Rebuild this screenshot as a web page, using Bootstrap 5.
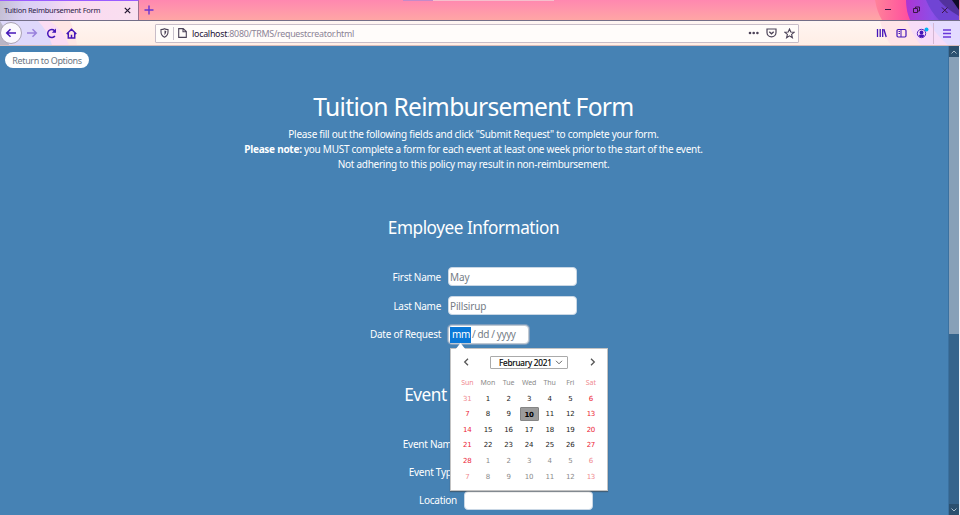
<!DOCTYPE html>
<html lang="en">
<head>
<meta charset="utf-8">
<title>Tuition Reimbursement Form</title>
<link href="https://cdn.jsdelivr.net/npm/bootstrap@5.3.0/dist/css/bootstrap.min.css" rel="stylesheet">
<style>
html{font-size:10px}
body{width:960px;height:515px;overflow:hidden;font-family:"Noto Sans","Open Sans",sans-serif;font-size:10px;background:#fff;line-height:15px}
svg{display:block;flex:none;fill:none;stroke:currentColor}
svg.strip-art,svg.tool-art{stroke:none}
.tabs-strip{height:21px;background:linear-gradient(#ff88b0,#ffa6a5);border-bottom:1px solid #736e88;position:relative}
.strip-art{position:absolute;right:1px;top:0}
.tab-open{width:139px;height:20px;border-top:1px solid #9a5cff;border-right:1px solid #9a6f8d;background:linear-gradient(100deg,#c3bed2 0,#d9d0f4 18%,#e5d3f5 35%,#fbdaf0 52%,#f8dff0 100%);padding-left:4px;color:#2b1a45;font-size:7.5px;letter-spacing:-.27px}
.new-tab{margin-left:5px;color:#6a35d0}
.win-keys{right:1px;top:0;height:20px;color:#3b1746;z-index:2}
.top-line{left:403px;top:0;width:151px;height:1px;background:linear-gradient(90deg,#c58ac8 20%,#f5bfcc 20%)}
.tool-strip{height:25px;border-bottom:1px solid #d9bcbb;background:linear-gradient(#fff5f2,#ffeee5);color:#4516b8;position:relative}
.tool-art{position:absolute;left:0;top:0}
.tool-strip>.above{position:relative;z-index:1;flex:none}
.back-key{width:22px;height:22px;border:1px solid #a9a2b4;background:#fbf8fe}
.url-box{position:relative;z-index:1;flex:none;width:644px;height:19px;background:#fffcfa;border:1px solid #c8bdc8;border-radius:1px;color:#4c4358;padding:0 3px 0 4px}
.keys-left{width:155px}
.url-text{font-size:8.9px;color:#8c8496;letter-spacing:-.32px;letter-spacing:-.26px;padding-top:1px;margin-left:5px}
.url-text b{font-weight:400;color:#221436}
.page-view{height:469px;width:948px;background:#4682b4;color:#fff;overflow:hidden}
.return-btn{margin:6px 0 0 5px;width:84px;height:16px;background:#fff;color:#6c7885;font-size:9px;letter-spacing:-.37px;line-height:17px;border-radius:8px}
.title-main{font-size:24.6px;line-height:30px;font-weight:400;margin:24px 0 5px;letter-spacing:-.7px;padding-right:1px}
.intro{letter-spacing:-.27px;font-size:10px;padding-right:1px}
.sect{font-size:17.2px;line-height:22px;font-weight:400;margin:0;letter-spacing:-.46px;padding-right:1px}
.field-row{height:19px;margin-bottom:10px}
.lab{width:441px;text-align:right;letter-spacing:-.27px;padding-top:1px}
.lab-event{width:457px;padding-top:0}
.field-row .entry{width:129px;height:19px;min-height:0;margin-left:7px;padding:1px 1px 0;border:1px solid #c9d7e5;border-radius:4px;font-size:10px;line-height:17px;letter-spacing:-.15px;color:#757d86;background:#fff}
.field-row .date-entry{width:81px;padding:0 2px;border:1px solid #bfc9d3;box-shadow:0 0 0 1px #7e9dbd;letter-spacing:-.4px}
.date-label{padding-top:0}
.seg-on{background:#0a78d7;color:#fff;padding:0 1px 0 2px;margin-left:-1px;height:16px;line-height:15px;width:21px}
.scroller{width:12px;height:469px;background:#35648c;border-left:1px solid #3b71a0;border-right:1px solid #f4f4f8}
.scroller .cap{height:11px;background:#2b506f;color:#a9bccb}
.scroller .thumb{height:277px;background:#87a0b8}
.date-pop{left:450px;top:348px;width:158px;height:143px;background:#fff;border:1px solid #c3c3c3;box-shadow:0 1px 1px rgba(60,60,60,.5);z-index:5;color:#222}
.date-pop .tip{left:4px;top:-6px;color:#fff}
.month-bar{height:20px;margin:3px 10px 1px 11px;color:#555}
.month-pick{width:78px;height:13px;border:1px solid #aaa;border-radius:1px;color:#000;font-size:8.2px;letter-spacing:-.2px;line-height:11px;margin-left:20px;padding-left:8px;-webkit-text-stroke:.15px #000}
.day-grid{display:grid;grid-template-columns:repeat(7,20.6px);grid-template-rows:repeat(7,15.6px);margin:3px 0 0 6px;text-align:center;font-family:"DejaVu Sans","Noto Sans",sans-serif;font-size:7px;line-height:16px;letter-spacing:-.25px;color:#222}
.day-grid span:nth-child(7n+1),.day-grid span:nth-child(7n){color:#ec2636}
.day-grid .out{color:#8a8a8a}
.day-grid .head{font-family:"Noto Sans",sans-serif;color:#8a8a8a;letter-spacing:-.1px;line-height:15px}
.day-grid .out:nth-child(7n+1),.day-grid .out:nth-child(7n),.day-grid .head:nth-child(7n+1),.day-grid .head:nth-child(7n){color:#f08a90}
.day-grid .today{background:#9c9c9c;border:1px solid #858585;border-radius:1px;font-weight:700;color:#000;margin:.4px .8px 1px;line-height:14px}
</style>
<script src="https://cdn.jsdelivr.net/npm/bootstrap@5.3.0/dist/js/bootstrap.bundle.min.js"></script>
</head>
<body class="position-relative">
<header>
  <div class="tabs-strip d-flex align-items-center">
    <svg class="strip-art" width="90" height="20"><defs><linearGradient id="pk"><stop offset="0" stop-color="#ff8299"/><stop offset=".5" stop-color="#ff43a0"/></linearGradient><linearGradient id="vi"><stop offset="0" stop-color="#ad35d2"/><stop offset=".5" stop-color="#8c4ee8"/><stop offset="1" stop-color="#6b40cf"/></linearGradient></defs><path d="M6 0q2 12 7 20h77V0z" fill="url(#pk)"/><path d="M37 0q0 11 4 20h49V0z" fill="url(#vi)"/><path d="M57 0q5 12 13 20h20V0z" fill="#7044d4"/><path d="M70 0q6 8 20 16V0z" fill="#3b2270" opacity=".55"/><path d="M83 0l7 10V0z" fill="#100c28"/></svg>
    <div class="tab-open d-flex align-items-center"><span>Tuition Reimbursement Form</span><svg class="ms-auto" style="margin-right:7px" width="7" height="7"><path d="M.8.8l5.4 5.4M6.2.8L.8 6.2" stroke="#20152f" stroke-width="1.2"/></svg></div>
    <svg class="new-tab" width="10" height="10"><path d="M5 .5v9M.5 5h9" stroke-width="1.4"/></svg>
    <div class="top-line position-absolute"></div>
    <div class="win-keys position-absolute d-flex align-items-center">
      <svg width="75" height="20"><path d="M1 9.500h6M29.500 8.500h4v4h-4zM31.500 8.500v-1.500h4v4h-2M58 7.500l5.500 5.500M63.500 7.500L58 13"/></svg>
    </div>
  </div>
  <div class="tool-strip d-flex align-items-center">
    <svg class="tool-art" width="960" height="24"><path d="M0 0h70q5 10 7 24H0z" fill="#ffe6e4"/><path d="M0 0h50q14 10 19 24H0z" fill="#fbdcf3"/><path d="M0 0h38q10 10 14 24H0z" fill="#ded8fb"/><path d="M0 0q7 10 9 24H0z" fill="#b9b5c6"/><path d="M880 0q3 14 11 24h69V0z" fill="#ffe4e8"/><path d="M907 0q6 15 14 24h39V0z" fill="#f7dcf8"/><path d="M928 0q8 14 20 24h12V0z" fill="#e4dbff"/></svg>
    <div class="above keys-left d-flex align-items-center">
      <div class="back-key rounded-circle d-flex align-items-center justify-content-center"><svg width="12" height="10"><path d="M11 5H2M5.500 1.200L1.700 5l3.800 3.800" stroke-width="1.500"/></svg></div>
      <svg style="margin-left:4px;opacity:.45" width="12" height="10"><path d="M1 5h9M6.500 1.200L10.300 5 6.500 8.800" stroke-width="1.500"/></svg>
      <svg style="margin-left:8px" width="11" height="11"><path d="M8.900 8A4 4 0 1 1 8.600 2.800L9.600 4" stroke-width="1.500"/><path d="M10 .5v4.200H5.800z" fill="currentColor" stroke="none"/></svg>
      <svg style="margin-left:9px" width="11" height="11"><path d="M.7 6L5.500 1.200 10.300 6M2.300 5v5h6.400V5M5.500 10V6.800" stroke-width="1.500"/></svg>
    </div>
    <div class="url-box d-flex align-items-center">
      <svg width="9" height="10"><path d="M1 1.500Q3 1.500 4.500.700 6 1.500 8 1.500V4q0 3.500-3.500 5.200Q1 7.500 1 4z" stroke-width="1.100"/><path d="M4.500 2.500v4.700Q6.300 6 6.300 3.100z" fill="currentColor" stroke="none"/></svg>
      <svg style="margin-left:4px" width="1" height="13"><path d="M.5 0v13" stroke="#c9c2cc"/></svg>
      <svg style="margin-left:4px" width="9" height="10"><path d="M.7.600h4.500L8.300 3.500v5.900H.7zM5 .600v3.200h3.300" stroke-width="1.100"/></svg>
      <span class="url-text"><b>localhost</b>:8080/TRMS/requestcreator.html</span>
      <svg class="ms-auto" width="11" height="4"><g fill="currentColor" stroke="none"><circle cx="2" cy="2" r="1.300"/><circle cx="5.700" cy="2" r="1.300"/><circle cx="9.400" cy="2" r="1.300"/></g></svg>
      <svg style="margin-left:7px" width="11" height="10"><path d="M1 1h9v3.500a4.500 4.300 0 0 1-9 0z" stroke-width="1.200"/><path d="M3.300 3.700l2.200 2.100 2.200-2.100" stroke-width="1.300"/></svg>
      <svg style="margin-left:7px" width="11" height="11"><path d="M5.500 1l1.300 3 3.300.3-2.500 2.100.8 3.300-2.900-1.800-2.900 1.800.8-3.300L.9 4.300 4.200 4z" stroke-width="1.100"/></svg>
    </div>
    <svg class="above" style="margin-left:77px" width="83" height="23"><path d="M1.500 7v8M4.200 7v8M6.700 7v8M7.900 7.200L10.200 15" stroke-width="1.300"/><rect x="21" y="7.500" width="9" height="7.500" rx="1.200" stroke-width="1.200"/><path d="M25 7.500V15M22.500 9.500h1.500M22.500 11.500h1.500" /><circle cx="45.500" cy="11.500" r="4.200" stroke-width=".9"/><circle cx="45.500" cy="10.400" r="1.900" fill="currentColor" stroke="none"/><path d="M42.500 14q.5-1.800 3-1.800t3 1.800q-3 2.700-6 0z" fill="currentColor" stroke="none"/><circle cx="50.500" cy="7.500" r="2" fill="#00b3f4" stroke="none"/><path d="M57.500 1v21" stroke="#d4b7d3"/><path d="M67 8h8M67 11.500h8M67 15h8" stroke="#6937d9" stroke-width="1.400"/></svg>
  </div>
</header>
<div class="d-flex">
  <main class="page-view">
    <button class="return-btn btn border-0 p-0 d-block">Return to Options</button>
    <h1 class="title-main text-center">Tuition Reimbursement Form</h1>
    <div class="intro text-center">Please fill out the following fields and click "Submit Request" to complete your form.<br><b>Please note:</b> you MUST complete a form for each event at least one week prior to the start of the event.<br>Not adhering to this policy may result in non-reimbursement.</div>
    <h3 class="sect text-center" style="margin-top:45px;margin-bottom:28px">Employee Information</h3>
    <div class="field-row d-flex align-items-center"><label class="lab">First Name</label><div class="entry form-control">May</div></div>
    <div class="field-row d-flex align-items-center"><label class="lab">Last Name</label><div class="entry form-control">Pillsirup</div></div>
    <div class="field-row d-flex align-items-center"><label class="lab date-label">Date of Request</label><div class="entry date-entry form-control d-flex align-items-center"><span class="seg-on">mm</span><span style="margin-left:1px">/ dd / yyyy</span></div></div>
    <h3 class="sect text-center" style="margin-top:40px;margin-bottom:29px">Event Information</h3>
    <div class="field-row d-flex align-items-center" style="margin-bottom:9px"><label class="lab lab-event">Event Name</label><div class="entry form-control"></div></div>
    <div class="field-row d-flex align-items-center" style="margin-bottom:9px"><label class="lab lab-event">Event Type</label><div class="entry form-control"></div></div>
    <div class="field-row d-flex align-items-center"><label class="lab lab-event">Location</label><div class="entry form-control"></div></div>
  </main>
  <div class="scroller d-flex flex-column">
    <div class="cap d-flex align-items-center justify-content-center"><svg width="6" height="4"><path d="M.5 3.500L3 1l2.500 2.500"/></svg></div>
    <div class="thumb"></div>
    <div class="cap mt-auto d-flex align-items-center justify-content-center"><svg width="6" height="4"><path d="M.5.500L3 3l2.500-2.500"/></svg></div>
  </div>
</div>
<div class="date-pop position-absolute">
  <svg class="tip position-absolute" width="11" height="7"><path d="M0 7L5.500 0 11 7z" fill="#fff" stroke="none"/></svg>
  <div class="month-bar d-flex align-items-center">
    <svg width="8" height="8"><path d="M6 .8L2.700 4 6 7.200" stroke-width="1.300"/></svg>
    <div class="month-pick d-flex align-items-center"><span>February 2021</span><svg class="ms-auto" style="margin-right:4px" width="8" height="5"><path d="M1 .8l3 3 3-3" stroke="#666"/></svg></div>
    <svg class="ms-auto" width="8" height="8"><path d="M2 .8L5.300 4 2 7.200" stroke-width="1.300"/></svg>
  </div>
  <div class="day-grid">
    <span class="head">Sun</span><span class="head">Mon</span><span class="head">Tue</span><span class="head">Wed</span><span class="head">Thu</span><span class="head">Fri</span><span class="head">Sat</span>
    <span class="out">31</span><span>1</span><span>2</span><span>3</span><span>4</span><span>5</span><span>6</span>
    <span>7</span><span>8</span><span>9</span><span class="today">10</span><span>11</span><span>12</span><span>13</span>
    <span>14</span><span>15</span><span>16</span><span>17</span><span>18</span><span>19</span><span>20</span>
    <span>21</span><span>22</span><span>23</span><span>24</span><span>25</span><span>26</span><span>27</span>
    <span>28</span><span class="out">1</span><span class="out">2</span><span class="out">3</span><span class="out">4</span><span class="out">5</span><span class="out">6</span>
    <span class="out">7</span><span class="out">8</span><span class="out">9</span><span class="out">10</span><span class="out">11</span><span class="out">12</span><span class="out">13</span>
  </div>
</div>
</body>
</html>
